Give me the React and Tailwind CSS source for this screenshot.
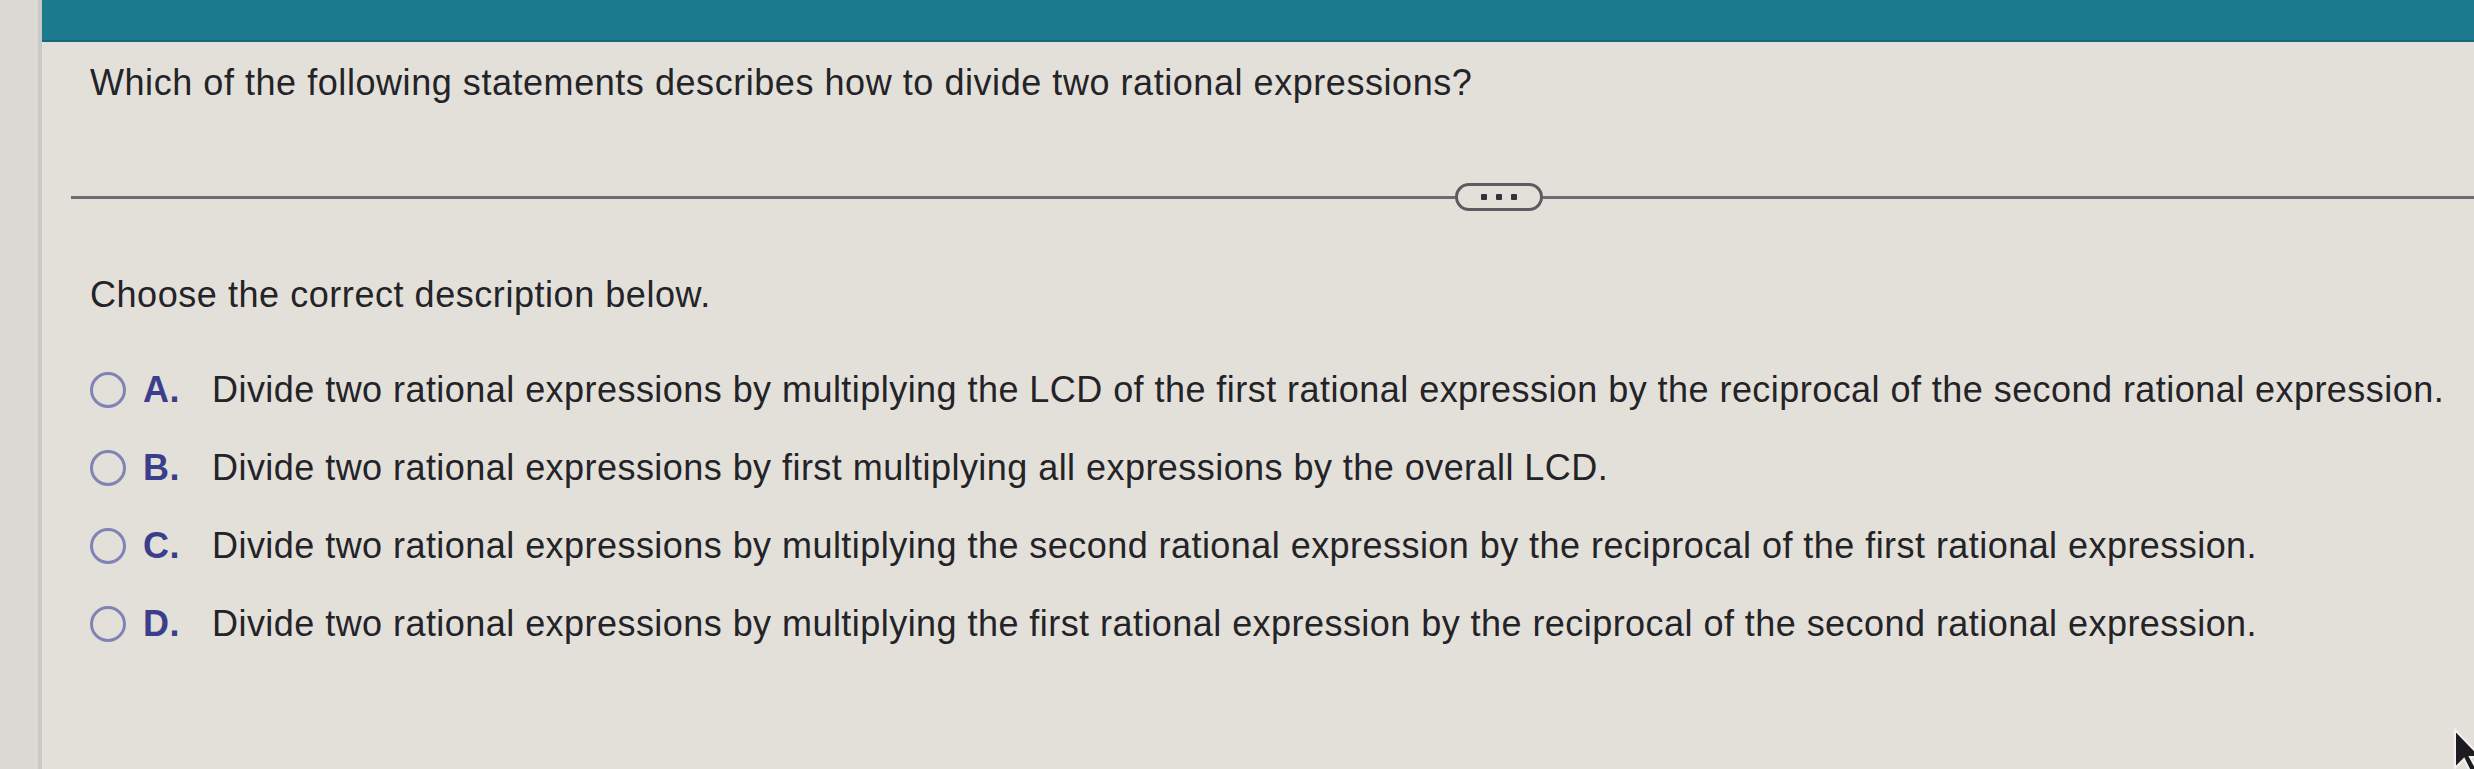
import React from 'react';

const options = [
  {
    letter: 'A.',
    text: 'Divide two rational expressions by multiplying the LCD of the first rational expression by the reciprocal of the second rational expression.',
  },
  {
    letter: 'B.',
    text: 'Divide two rational expressions by first multiplying all expressions by the overall LCD.',
  },
  {
    letter: 'C.',
    text: 'Divide two rational expressions by multiplying the second rational expression by the reciprocal of the first rational expression.',
  },
  {
    letter: 'D.',
    text: 'Divide two rational expressions by multiplying the first rational expression by the reciprocal of the second rational expression.',
  },
];

function Radio() {
  return (
    <span className="w-[36px] h-[36px] rounded-full border-[3px] border-[#8083b6] shrink-0" />
  );
}

export default function App() {
  return (
    <div
      className="relative w-[2474px] h-[769px] flex bg-[#dedbd4] overflow-hidden text-[#232328]"
      style={{ fontFamily: '"Liberation Sans", Arial, sans-serif' }}
    >
      {/* left gutter */}
      <div className="w-[42px] shrink-0 border-r-[4px] border-[#cbc9c5] bg-[#dddad5]" />

      <div className="flex-1 flex flex-col">
        {/* teal header */}
        <div className="h-[42px] bg-[#1b7a8e] border-b-[2px] border-[#16677a] shrink-0" />

        <div className="flex-1 bg-[#e3e0d9] flex flex-col">
          {/* question */}
          <div className="pl-[48px] pt-[19px] text-[36px] leading-[44px] tracking-[0.55px]">
            Which of the following statements describes how to divide two rational expressions?
          </div>

          {/* divider */}
          <div className="mt-[78px] flex items-center pl-[29px]">
            <div className="w-[1384px] h-[3px] bg-[#6d6a72]" />
            <div className="w-[88px] h-[28px] rounded-full border-[3px] border-[#5d5a62] flex items-center justify-center gap-[9px]">
              <span className="w-[6px] h-[6px] rounded-[1px] bg-[#34323a]" />
              <span className="w-[6px] h-[6px] rounded-[1px] bg-[#34323a]" />
              <span className="w-[6px] h-[6px] rounded-[1px] bg-[#34323a]" />
            </div>
            <div className="flex-1 h-[3px] bg-[#6d6a72]" />
          </div>

          {/* prompt */}
          <div className="pl-[48px] pt-[62px] text-[36px] leading-[44px] tracking-[0.55px]">
            Choose the correct description below.
          </div>

          {/* options */}
          <div className="pl-[48px] pt-[51px] flex flex-col gap-[34px]">
            {options.map((o) => (
              <div key={o.letter} className="flex items-center text-[36px] leading-[44px] tracking-[0.45px]">
                <Radio />
                <span className="w-[86px] pl-[17px] font-bold text-[#3a3e8d]">{o.letter}</span>
                <span>{o.text}</span>
              </div>
            ))}
          </div>
        </div>
      </div>

      {/* mouse cursor */}
      <svg className="absolute left-[2452px] top-[728px]" width="30" height="46" viewBox="0 0 30 46">
        <path d="M3 2 L3 40 L12 31 L19 45 L25 42 L18 29 L29 29 Z" fill="#1c1c20" stroke="#f2f2f2" strokeWidth="2" />
      </svg>
    </div>
  );
}
